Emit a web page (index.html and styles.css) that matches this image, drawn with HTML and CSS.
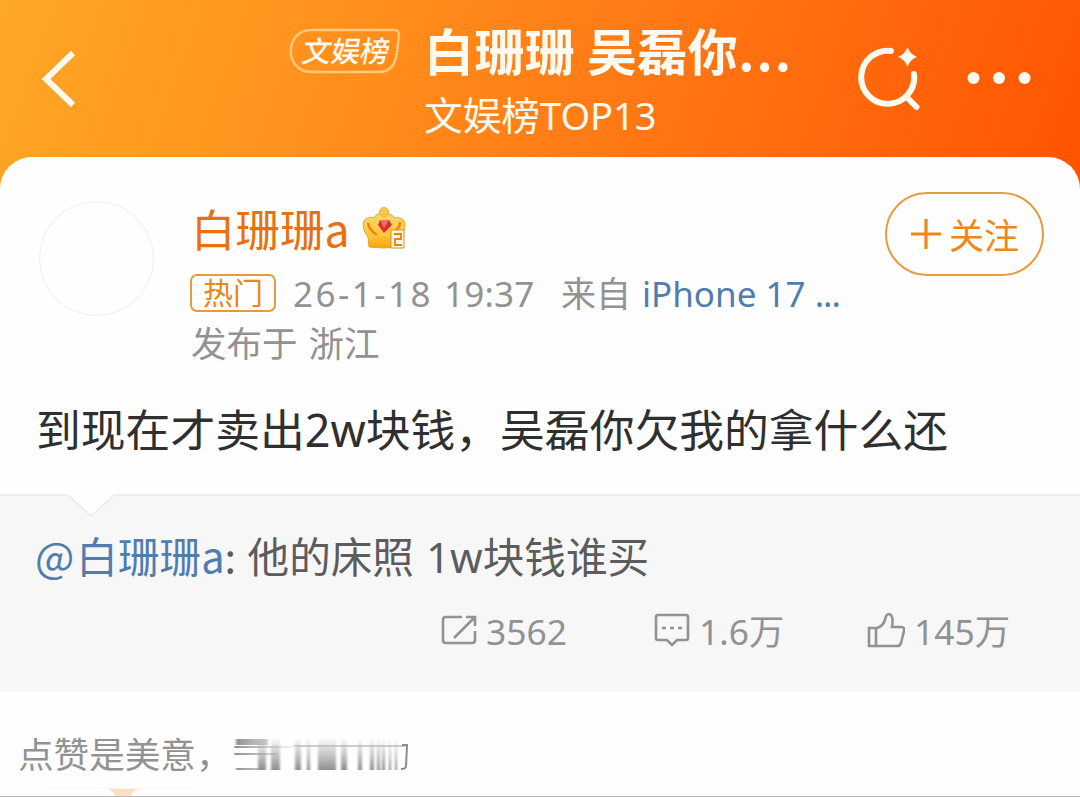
FILE: index.html
```html
<!DOCTYPE html>
<html lang="zh-CN">
<head>
  <meta charset="UTF-8" />
  <meta name="viewport" content="width=device-width, initial-scale=1.0"/>
  <title>白珊珊 吴磊你...</title>
  <link rel="stylesheet" href="styles.css">
</head>
<body>
  <header class="topbar">
    <svg class="back" viewBox="0 0 36 60" width="36" height="60"><path d="M32 4 5 30l27 26"/></svg>
    <div class="rank-tag">
      <svg viewBox="0 0 112 46" width="112" height="46"><path d="M22 2h83q5 0 5 5l-2 17q-2 20-18 20H22C-5 44-5 2 22 2z"/></svg>
      <span>文娱榜</span>
    </div>
    <div class="titles">
      <h1>白珊珊 吴磊你<span class="dots">...</span></h1>
      <p>文娱榜<span class="top">TOP13</span></p>
    </div>
    <svg class="search" viewBox="0 0 66 66" width="66" height="66">
      <path class="ring" d="M34 6A26.500 26.500 0 1 0 57 29M49 51.500l10.500 10.500"/>
      <path class="star" d="M50.500 2q2.500 7.500 9.500 10Q53 14.500 50.500 22q-2.500-7.500-9.500-10Q48 9.500 50.500 2z"/>
    </svg>
    <svg class="more" viewBox="0 0 64 14" width="64" height="14"><circle cx="6.500" cy="7" r="6"/><circle cx="32" cy="7" r="6"/><circle cx="57.500" cy="7" r="6"/></svg>
  </header>

  <main class="card">
    <section class="author">
      <div class="avatar"></div>
      <div class="info">
        <div class="name">
          <span>白珊珊a</span>
          <svg class="crown" viewBox="0 0 44 42" width="44" height="42">
            <defs>
              <linearGradient id="gold" x1="0" y1="0" x2="0" y2="1">
                <stop offset="0" stop-color="#ffd96a"/><stop offset=".6" stop-color="#ffc83a"/><stop offset="1" stop-color="#f5a60b"/>
              </linearGradient>
            </defs>
            <path d="M7 40 6 30Q-1 21 2 14q4-5 9-3 4-5 11-5t11 5q5-2 9 3 3 7-4 16l-1 10q-15 2-30 0z" fill="url(#gold)" stroke="#e8a32d"/>
            <circle cx="22" cy="5" r="4.500" fill="#ffc64b" stroke="#eda93b"/>
            <path d="M6 16q1 7 9 12M38 15q0 5-4 8" fill="none" stroke="#e88717" stroke-width="2.500"/>
            <path d="M18 13h9l3 5-8 8-6-8z" fill="#dd2e2e"/>
            <path d="M18 13h9l-5 8z" fill="#f36e68"/>
            <path d="M29 23h13v18H29z" fill="#fff7dc" stroke="#e48a1e"/>
            <path d="M32 27h7v5h-6v6h7" fill="none" stroke="#df8128" stroke-width="1.800"/>
          </svg>
        </div>
        <div class="meta">
          <span class="hot">热门</span>
          <span class="date">26-1-18</span>
          <span class="time">19:37</span>
          <span class="from">来自</span>
          <a class="device">iPhone 17 <span>...</span></a>
        </div>
        <div class="place">发布于 浙江</div>
      </div>
      <button class="follow">
        <svg viewBox="0 0 32 32" width="32" height="32"><path d="M16 1v30M1 16h30"/></svg>
        <span>关注</span>
      </button>
    </section>

    <p class="post">到现在才卖出<span>2w</span>块钱，吴磊你欠我的拿什么还</p>

    <section class="quote">
      <svg class="notch" viewBox="0 0 52 26" width="52" height="26"><path class="fill" d="M0 0h52v2h-3L26 24 3 2H0z"/><path class="edge" d="M0 2h3l23 21L49 2h3"/></svg>
      <p class="quote-text"><a><span class="at">@</span>白珊珊a</a><span class="colon">:</span>他的床照 <span class="price">1w</span>块钱谁买</p>
      <div class="stats">
        <div class="stat share">
          <svg viewBox="0 0 36 32" width="36" height="32"><path d="M21 3H5Q2 3 2 6v20q0 3 3 3h26q3 0 3-3V17M13 24 33 4M25 3h9v9"/></svg>
          <span>3562</span>
        </div>
        <div class="stat comment">
          <svg viewBox="0 0 36 34" width="36" height="34"><path d="M4 2h28q2 0 2 2v21q0 2-2 2h-9l-5 5-5-5H4q-2 0-2-2V4q0-2 2-2z"/><path d="M8 15h4M16 15h4M24 15h4"/></svg>
          <span>1.6万</span>
        </div>
        <div class="stat like">
          <svg viewBox="0 0 38 36" width="38" height="36"><path d="M2 16h8q6-2 8-8 1-6 4-6 5 1 3 13h9q4 0 3 4l-3 12q-1 3-4 3H2zM9 16v18"/></svg>
          <span>145万</span>
        </div>
      </div>
    </section>

    <section class="comment-bar">
      <span>点赞是美意，</span>
      <svg class="smear" viewBox="0 0 176 36" width="176" height="36">
        <defs>
          <linearGradient id="down" x1="0" y1="0" x2="0" y2="1"><stop offset="0" stop-color="#999" stop-opacity="0"/><stop offset="1" stop-color="#8e8e8e"/></linearGradient>
          <linearGradient id="side"><stop offset="0" stop-color="#8c8c8c"/><stop offset="1" stop-color="#aaa" stop-opacity=".1"/></linearGradient>
          <filter id="soft"><feGaussianBlur stdDeviation="1.300 .6"/></filter>
        </defs>
        <g filter="url(#soft)">
          <path d="M2 3h32v6H2zM0 10h60v2H0zM0 17h44v2H0zM2 32h22v2H2z" fill="url(#side)"/>
          <path d="M24 2h8v32h-8zM37 2h9v32h-9zM61 2h6v32h-6zM73 2h3v32h-3zM84 2h18v32H84zM107 2h6v32h-6zM124 2h4v32h-4zM136 2h4v32h-4zM143 2h3v32h-3zM148 2h3v32h-3zM155 2h2v32h-2zM161 2h2v32h-2z" fill="url(#down)"/>
          <path d="M60 10h112" stroke="#bbb" stroke-width="1.500"/>
        </g>
        <path d="M168 9h5l-1 21q0 3-5 3" fill="none" stroke="#8c8c8c" stroke-width="2"/>
      </svg>
    </section>
    <div class="bottom-edge"><svg viewBox="0 0 144 9" width="144" height="9"><path d="M0 1h144" stroke="#fff6ec"/><path d="M60 2h31q-6 2-8 7H67q-2-5-7-7z" fill="#fde0c4"/></svg></div>
  </main>
</body>
</html>
```

FILE: styles.css
```css
* {
  box-sizing: border-box;
}
body {
  margin: 0;
  width: 1080px;
  height: 797px;
  overflow: hidden;
  font-family: "Noto Sans CJK SC", sans-serif;
  background: linear-gradient(110deg, #ffa726 0, #ff951e 25%, #ff7d16 53%, #ff660b 79%, #ff5300 100%) 0 0 / 1080px 190px no-repeat;
  color: #333;
}
h1, p {
  margin: 0;
  font-weight: 400;
}
svg {
  display: block;
  flex: none;
}
span, a, p, h1, .place {
  white-space: nowrap;
}

/* top bar */
.topbar {
  height: 157px;
  display: flex;
  align-items: flex-start;
  color: #fffaf0;
}
.back {
  margin: 49px 0 0 41px;
  fill: none;
  stroke: #fffaf0;
  stroke-width: 6;
}
.rank-tag {
  position: relative;
  width: 112px;
  height: 46px;
  margin: 28px 0 0 212px;
}
.rank-tag path {
  fill: none;
  stroke: #ffc778;
  stroke-width: 2.5;
}
.rank-tag span {
  position: absolute;
  left: 14px;
  top: -1px;
  font-size: 29px;
  line-height: 44px;
  font-weight: 500;
  transform: skewX(-10deg);
}
.titles {
  width: 380px;
  margin: 19px 0 0 23px;
}
.titles h1 {
  font-size: 50px;
  line-height: 60px;
  font-weight: 700;
  letter-spacing: 0.4px;
}
.dots {
  letter-spacing: 2px;
}
.titles p {
  font-size: 38.7px;
  line-height: 68px;
}
.top {
  font-family: "Noto Sans", sans-serif;
  font-size: 38px;
}
.search {
  margin: 45px 0 0 53px;
}
.ring {
  fill: none;
  stroke: #fffaf0;
  stroke-width: 6;
  stroke-linecap: round;
}
.star, .more {
  fill: #fffaf0;
}
.more {
  margin: 71px 0 0 44px;
}

/* post */
.card {
  height: 640px;
  background: #fefefe;
  border-radius: 32px 32px 0 0;
}
.author {
  height: 230px;
  display: flex;
  align-items: flex-start;
}
.avatar {
  width: 115px;
  height: 115px;
  margin: 44px 0 0 39px;
  border: 1px solid #eee;
  border-radius: 50%;
}
.info {
  width: 660px;
  margin: 41px 0 0 37px;
}
.name {
  display: flex;
  height: 68px;
  font-size: 44.5px;
  line-height: 60px;
  color: #e8700f;
}
.crown {
  margin: 9px 0 0 12px;
}
.meta {
  display: flex;
  height: 52px;
  font-family: "Noto Sans", "Noto Sans CJK SC", sans-serif;
  font-size: 35px;
  line-height: 56px;
  color: #929292;
}
.hot {
  width: 86px;
  height: 38px;
  margin: 8px 17px 0 -1px;
  border: 2px solid #e39a45;
  border-radius: 7px;
  font-size: 30px;
  line-height: 33px;
  text-align: center;
  color: #e8851c;
}
.date {
  width: 151px;
  letter-spacing: 2.5px;
}
.time {
  width: 117px;
  letter-spacing: 0.2px;
}
.from {
  width: 81px;
}
.device {
  color: #507daf;
}
.device span {
  letter-spacing: -1px;
}
.place {
  font-size: 35.5px;
  line-height: 48px;
  word-spacing: 3px;
  color: #929292;
}
.follow {
  display: flex;
  align-items: center;
  width: 159px;
  height: 84px;
  margin: 35px 0 0 34px;
  padding: 0 0 0 23px;
  border: 2px solid #e99a3c;
  border-radius: 42px;
  background: none;
  font: 35px/80px "Noto Sans CJK SC", sans-serif;
  color: #ec8718;
}
.follow svg {
  margin-right: 7px;
  stroke: #ec8718;
  stroke-width: 3.2;
}
.post {
  height: 107px;
  padding-left: 36px;
  font-size: 44.8px;
  line-height: 82px;
  color: #2f2f2f;
}
.post span, .price {
  font-family: "Noto Sans", sans-serif;
}

/* quoted post */
.quote {
  position: relative;
  height: 198px;
  padding-top: 29px;
  background: #f7f7f7;
  border-top: 2px solid #ebebeb;
}
.notch {
  position: absolute;
  left: 65px;
  top: -3px;
}
.notch .fill {
  fill: #fefefe;
}
.notch .edge {
  fill: none;
  stroke: #ebebeb;
  stroke-width: 1.5;
}
.quote-text {
  padding-left: 35px;
  font-size: 41.6px;
  line-height: 60px;
  word-spacing: 3px;
  color: #5c5c5c;
}
.quote-text a {
  color: #507daf;
}
.at {
  letter-spacing: 2px;
}
.colon {
  display: inline-block;
  width: 23px;
}
.stats {
  display: flex;
  height: 50px;
  margin-top: 19px;
  padding-left: 441px;
}
.stat {
  display: flex;
  align-items: center;
  width: 213px;
  font-family: "Noto Sans", "Noto Sans CJK SC", sans-serif;
  font-size: 35.4px;
  line-height: 50px;
  color: #929292;
}
.stat svg {
  margin: 0 9px 2px 0;
  fill: none;
  stroke: #929292;
  stroke-width: 2.6;
}

/* comment input */
.comment-bar {
  display: flex;
  height: 95px;
  padding: 33px 0 0 18px;
  font-size: 35.6px;
  line-height: 56px;
  color: #929292;
}
.smear {
  margin: 11px 0 0 3px;
}
.bottom-edge {
  height: 10px;
  padding-left: 48px;
  border-bottom: 1px solid #b9b9b9;
}
```
